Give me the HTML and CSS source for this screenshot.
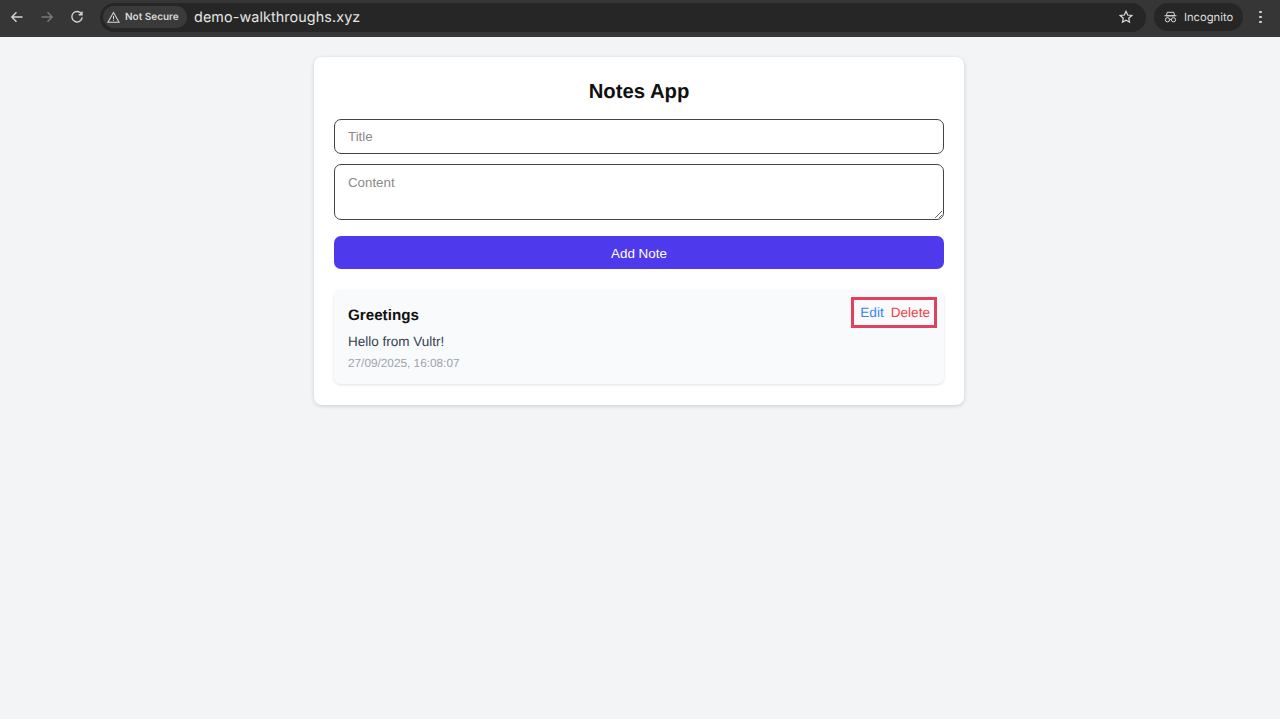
FILE: index.html
```html
<!DOCTYPE html>
<html lang="en">
<head>
<meta charset="utf-8">
<title>Notes App</title>
<link rel="stylesheet" href="styles.css">
</head>
<body>
<header class="browser">
  <svg class="nav-icon" viewBox="0 0 14 14"><path d="M12.5 7H2M6.5 2.2 1.8 7l4.7 4.8"/></svg>
  <svg class="nav-icon dim" viewBox="0 0 14 14"><path d="M1.5 7H12M7.5 2.2 12.2 7l-4.7 4.8"/></svg>
  <svg class="nav-icon" viewBox="0 0 14 14"><path d="M11.6 4.2A5.2 5.2 0 1 0 12.2 7.4M12 1.4v3.3H8.7"/></svg>
  <div class="omnibox">
    <div class="chip">
      <svg class="warn" viewBox="0 0 14 14"><path d="M7 1.6 13 12.2H1zM7 5.4v3.6M7 10v.9"/></svg>
      <span>Not Secure</span>
    </div>
    <span class="url">demo-walkthroughs.xyz</span>
    <svg class="star" viewBox="0 0 14 14"><path d="M7 1.3 8.7 5l4 .5-3 2.7.8 4L7 10.2l-3.5 2 .8-4-3-2.7 4-.5z"/></svg>
  </div>
  <div class="profile">
    <svg class="spy" viewBox="0 0 16 14"><path d="M4 1.2h8l1.1 4.3H2.9zM.6 5.5h14.8"/><circle cx="4.3" cy="10.4" r="2.6"/><circle cx="11.7" cy="10.4" r="2.6"/><path d="M6.9 10h2.2"/></svg>
    <span>Incognito</span>
  </div>
  <div class="menu"><i></i><i></i><i></i></div>
</header>
<main class="page">
  <section class="card">
    <h1>Notes App</h1>
    <form class="form">
      <input class="field" type="text" placeholder="Title">
      <textarea class="field area" placeholder="Content"></textarea>
      <button class="add" type="button">Add Note</button>
    </form>
    <article class="note">
      <div class="note-body">
        <h2>Greetings</h2>
        <p class="text">Hello from Vultr!</p>
        <p class="stamp">27/09/2025, 16:08:07</p>
      </div>
      <div class="actions">
        <a class="edit">Edit</a>
        <a class="delete">Delete</a>
      </div>
    </article>
  </section>
</main>
</body>
</html>
```
FILE: styles.css
```css
* { box-sizing: border-box; }
html, body { margin: 0; height: 100%; }
body {
  display: flex;
  flex-direction: column;
  background: #f3f4f6;
  font-family: "Liberation Sans", Arial, sans-serif;
  text-rendering: geometricPrecision;
  overflow: hidden;
}
.browser {
  height: 37px;
  flex: none;
  display: flex;
  align-items: center;
  padding: 0 12px 3px 10px;
  background: #363636;
  color: #e3e3e3;
}
.nav-icon {
  width: 14px;
  height: 14px;
  margin-right: 16px;
  fill: none;
  stroke: #d4d4d4;
  stroke-width: 1.4;
}
.nav-icon.dim { stroke: #7a7a7a; }
.omnibox {
  width: 1046px;
  height: 29px;
  padding: 0 13px 0 3px;
  display: flex;
  align-items: center;
  border-radius: 15px;
  background: #262626;
}
.chip {
  height: 22px;
  width: 84px;
  display: flex;
  align-items: center;
  gap: 5px;
  padding-left: 4px;
  border-radius: 11px;
  background: #3a3a3a;
  font-size: 10px;
  font-weight: 600;
  font-family: Inter, "Liberation Sans", sans-serif;
  white-space: nowrap;
  color: #d8d8d8;
}
.warn { width: 13px; height: 13px; flex: none; fill: none; stroke: #d8d8d8; stroke-width: 1.1; }
.url {
  margin-left: 7px;
  font-family: Inter, "Liberation Sans", sans-serif;
  font-size: 14.35px;
  letter-spacing: 0.1px;
  color: #e6e6e6;
}
.star { width: 14px; height: 14px; margin-left: auto; fill: none; stroke: #dcdcdc; stroke-width: 1.2; }
.profile {
  width: 89px;
  height: 28px;
  margin-left: 8px;
  display: flex;
  align-items: center;
  gap: 7px;
  padding-left: 10px;
  border-radius: 14px;
  background: #262626;
  font-family: Inter, "Liberation Sans", sans-serif;
  font-size: 11.2px;
  color: #dedede;
}
.spy { width: 13px; height: 12px; flex: none; fill: none; stroke: #dedede; stroke-width: 1.2; }
.menu {
  margin-left: 16px;
  display: flex;
  flex-direction: column;
  gap: 2.5px;
}
.menu i { width: 2.5px; height: 2.5px; border-radius: 50%; background: #d8d8d8; }
.page {
  flex: 1;
  display: flex;
  justify-content: center;
  align-items: flex-start;
  padding: 20px 2px 0 0;
}
.card {
  width: 650px;
  padding: 20px 20px 21px;
  background: #fff;
  border-radius: 8px;
  box-shadow: 0 1px 4px rgba(0, 0, 0, 0.16);
}
h1 {
  margin: 1px 0 13px;
  height: 28px;
  line-height: 28px;
  font-size: 20.3px;
  font-weight: 700;
  text-align: center;
  color: #111;
}
.form { display: flex; flex-direction: column; }
.field {
  display: block;
  width: 100%;
  height: 35px;
  margin-bottom: 10px;
  padding: 0 13px 1px;
  border: 1.3px solid #444;
  border-radius: 7px;
  background: #fff;
  font-family: inherit;
  font-size: 13.3px;
}
.field::placeholder { color: #8a8a8a; opacity: 1; }
.area { height: 56px; margin-bottom: 16px; padding-top: 10px; resize: vertical; }
.add {
  height: 33px;
  padding-top: 2px;
  border: 0;
  border-radius: 7px;
  background: #4f39ec;
  color: #fff;
  font-family: inherit;
  font-size: 13.4px;
}
.note {
  margin-top: 21px;
  height: 94px;
  display: flex;
  justify-content: space-between;
  align-items: flex-start;
  padding: 7px 7px 0 14px;
  border-radius: 7px;
  background: #f9fafb;
  box-shadow: 0 1px 3px rgba(0, 0, 0, 0.12);
}
h2 { margin: 9px 0 8px; font-size: 15.2px; line-height: 19px; color: #111; }
.text { margin: 0 0 4px; font-size: 13.5px; line-height: 18px; color: #374151; }
.stamp { margin: 0; font-size: 11.8px; line-height: 17px; color: #9ca3af; }
.actions {
  width: 86px;
  height: 31px;
  display: flex;
  align-items: center;
  justify-content: flex-end;
  gap: 7px;
  padding-right: 4px;
  border: 3px solid #e2405f;
  font-size: 13.6px;
}
.edit { color: #3b82f6; }
.delete { color: #ef4444; }
```
